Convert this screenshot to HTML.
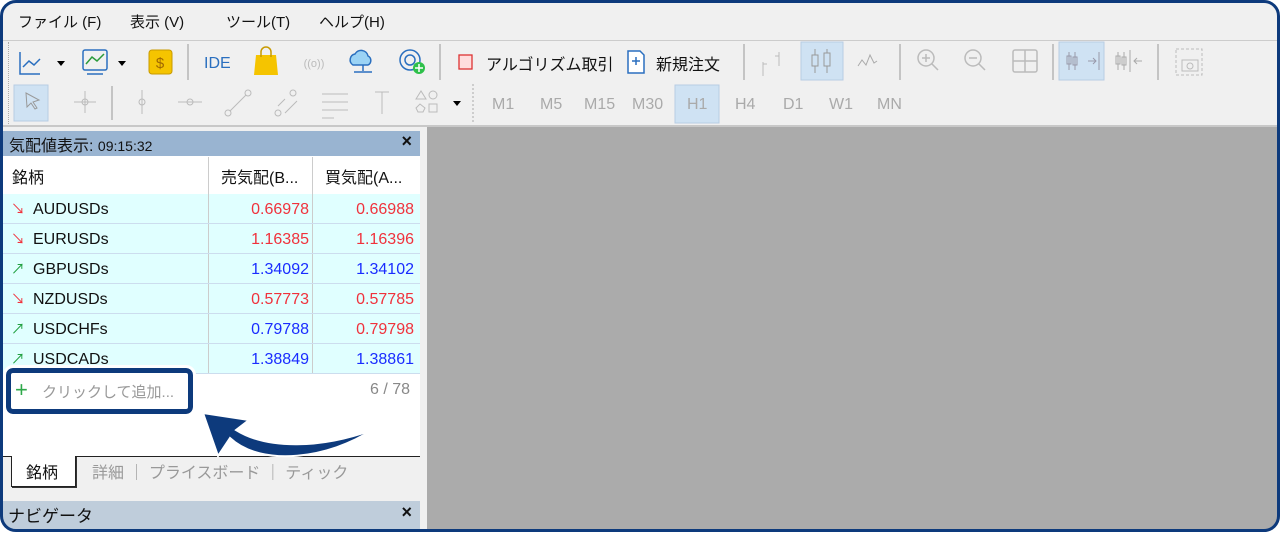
<!DOCTYPE html><html><head><meta charset="utf-8"><style>
*{margin:0;padding:0;box-sizing:border-box}
body{width:1280px;height:532px;background:#f0f0f0;font-family:"Liberation Sans","Noto Sans CJK JP",sans-serif;overflow:hidden;position:relative}
.border{position:absolute;left:0;top:0;width:1280px;height:532px;border:3px solid #0d3a7c;border-radius:16px;box-shadow:0 0 0 30px #fff;z-index:10}
.a{position:absolute}
.menu span{position:absolute;top:11px;font-size:15px;color:#111}
.tb{color:#aaa;font-size:16px}
.row{position:absolute;left:0;width:420px;height:30px;background:#e0ffff;border-bottom:1px solid #cde;font-size:16px}
.row .s{position:absolute;left:33px;top:7px;color:#111}
.row .ar{position:absolute;left:11px;top:5px;font-size:14px}
.row .b{position:absolute;right:111px;top:7px}
.row .k{position:absolute;right:6px;top:7px}
.vl{position:absolute;top:0;width:1px;height:100%;background:#ccc}
.r{color:#f0323c}.bl{color:#1a2cff}
</style></head><body>
<div class="menu">
<span style="left:18px">ファイル (F)</span><span style="left:130px">表示 (V)</span><span style="left:226px">ツール(T)</span><span style="left:319px">ヘルプ(H)</span>
</div>
<div class="a" style="left:0;top:40px;width:1280px;height:1px;background:#ccc"></div>
<svg class="a" style="left:0;top:40px" width="1280" height="86">
<g stroke="#2a6fbf" fill="none" stroke-width="1.5">
<path d="M20 12v22h20"/><path d="M23 27l6-6 5 4 6-6"/>
<rect x="83" y="10" width="24" height="20" rx="2"/><path d="M86 24l6-7 5 4 7-7" stroke="#2a9a3a"/><path d="M87 34h16"/>
</g>
<path d="M57 21h8l-4 5z M118 21h8l-4 5z" fill="#000"/>
<rect x="149" y="10" width="23" height="24" rx="3" fill="#f5c400" stroke="#c89a00"/><text x="160" y="28" font-size="15" text-anchor="middle" fill="#a06800" font-family="Liberation Sans">$</text>
<line x1="188" y1="4" x2="188" y2="40" stroke="#999"/>
<text x="204" y="28" font-size="16" fill="#2a6fbf" font-family="Liberation Sans">IDE</text>
<path d="M256 15h20l2 20h-24z" fill="#f5c400"/><path d="M261 17v-5a5 5 0 0 1 10 0v5" stroke="#c89a00" fill="none" stroke-width="1.5"/>
<text x="314" y="27" font-size="11" fill="#bbb" text-anchor="middle">((o))</text>
<path d="M353 25a6 6 0 0 1 2-11a7 7 0 0 1 13 2a5 5 0 0 1 0 9z" fill="#9bd3f5" stroke="#2a6fbf" stroke-width="1.5"/><path d="M363 25v6M354 32h18" stroke="#2a6fbf" stroke-width="1.5"/>
<circle cx="410" cy="20" r="10" fill="none" stroke="#2a6fbf" stroke-width="1.5"/><circle cx="410" cy="20" r="5" fill="none" stroke="#2a6fbf" stroke-width="1.5"/><circle cx="419" cy="28" r="6" fill="#2ec04a"/><path d="M419 24v8M415 28h8" stroke="#fff" stroke-width="1.5"/>
<line x1="440" y1="4" x2="440" y2="40" stroke="#999"/>
<rect x="459" y="15" width="13" height="14" fill="#fdd" stroke="#d33" stroke-width="1.3"/>
<path d="M628 11h12l4 4v18h-16z" fill="#fff" stroke="#2a6fbf" stroke-width="1.5"/><path d="M636 17v8M632 21h8" stroke="#2a6fbf" stroke-width="1.5"/>
<line x1="744" y1="4" x2="744" y2="40" stroke="#999"/>
<path d="M763 22v14M763 24h4M779 12v14M775 16h4" stroke="#bbb" fill="none"/>
<rect x="801" y="2" width="42" height="38" fill="#cfe2f3" stroke="#b7cde3"/>
<path d="M815 9v24M827 9v24" stroke="#999"/><rect x="812" y="15" width="6" height="11" fill="#cfe2f3" stroke="#999"/><rect x="824" y="13" width="6" height="13" fill="#cfe2f3" stroke="#999"/>
<path d="M858 26l4-6 4 5 4-10 4 8 3-2" stroke="#aaa" fill="none"/>
<line x1="900" y1="4" x2="900" y2="40" stroke="#999"/>
<g stroke="#bbb" fill="none" stroke-width="1.5"><circle cx="926" cy="18" r="8"/><path d="M932 24l6 6M922 18h8M926 14v8"/><circle cx="973" cy="18" r="8"/><path d="M979 24l6 6M969 18h8"/><rect x="1013" y="10" width="24" height="22" rx="2"/><path d="M1025 10v22M1013 21h24"/></g>
<line x1="1053" y1="4" x2="1053" y2="40" stroke="#999"/>
<rect x="1059" y="2" width="45" height="38" fill="#cfe2f3" stroke="#b7cde3"/>
<g stroke="#99a" fill="none"><path d="M1069 12v18M1075 12v18M1088 21h8M1093 18l3 3-3 3M1099 12v18"/><rect x="1067" y="16" width="4" height="8"/><rect x="1073" y="17" width="4" height="8"/></g>
<g stroke="#aaa" fill="none"><path d="M1118 12v18M1124 12v18M1130 10v22M1134 21h8M1137 18l-3 3 3 3"/><rect x="1116" y="16" width="4" height="8"/><rect x="1122" y="17" width="4" height="8"/></g>
<line x1="1158" y1="4" x2="1158" y2="40" stroke="#999"/>
<rect x="1176" y="9" width="26" height="26" fill="none" stroke="#bbb" stroke-dasharray="3 2"/><rect x="1182" y="20" width="16" height="11" fill="none" stroke="#bbb"/><circle cx="1190" cy="26" r="3" fill="none" stroke="#bbb"/>
<rect x="14" y="45" width="34" height="36" fill="#cfe2f3" stroke="#b7cde3"/>
<path d="M26 53l13 7-6 2 4 6-2 1-4-6-4 4z" fill="none" stroke="#999"/>
<g stroke="#bbb" fill="none"><path d="M85 51v22M74 62h22"/><circle cx="85" cy="62" r="3"/></g>
<line x1="112" y1="46" x2="112" y2="80" stroke="#999"/>
<g stroke="#bbb" fill="none"><path d="M142 50v24"/><circle cx="142" cy="62" r="3"/><path d="M178 62h24"/><circle cx="190" cy="62" r="3"/><path d="M230 71l16-16"/><circle cx="228" cy="73" r="3"/><circle cx="248" cy="53" r="3"/><path d="M278 66l7-7M285 73l12-12"/><circle cx="278" cy="73" r="3"/><circle cx="293" cy="53" r="3"/><path d="M322 54h26M322 62h26M322 70h26M322 78h12"/><path d="M375 52h14M382 52v22"/><path d="M416 59l5-8 5 8z"/><circle cx="433" cy="55" r="4"/><rect x="429" y="64" width="8" height="8"/><path d="M416 68l4-4 5 4-2 4h-5z"/></g>
<path d="M453 61h8l-4 5z" fill="#000"/>
<line x1="473" y1="44" x2="473" y2="82" stroke="#aaa" stroke-dasharray="2 2"/>
<rect x="675" y="45" width="44" height="38" fill="#cfe2f3" stroke="#b7cde3"/>
</svg>
<div class="a" style="top:42px;height:84px;width:2px;border-left:1px dotted #aaa;left:8px"></div>
<div class="a" style="left:486px;top:51px;font-size:16px;color:#111">アルゴリズム取引</div>
<div class="a" style="left:656px;top:51px;font-size:16px;color:#111">新規注文</div>
<div class="a tb" style="left:492px;top:96px">M1</div>
<div class="a tb" style="left:540px;top:96px">M5</div>
<div class="a tb" style="left:584px;top:96px">M15</div>
<div class="a tb" style="left:632px;top:96px">M30</div>
<div class="a tb" style="left:687px;top:96px">H1</div>
<div class="a tb" style="left:735px;top:96px">H4</div>
<div class="a tb" style="left:783px;top:96px">D1</div>
<div class="a tb" style="left:829px;top:96px">W1</div>
<div class="a tb" style="left:877px;top:96px">MN</div>
<div class="a" style="left:0;top:125px;width:1280px;height:2px;background:#c8c8c8"></div>
<div class="a" style="left:427px;top:127px;width:860px;height:410px;background:#ababab"></div>
<div class="a" style="left:0;top:131px;width:420px;height:25px;background:#99b4d1;font-size:16px;color:#111;padding:1px 9px">気配値表示: <span style="font-size:14px">09:15:32</span><span style="position:absolute;right:8px;top:0px;font-weight:bold;font-size:18px">×</span></div>
<div class="a" style="left:0;top:156px;width:420px;height:300px;background:#fff"></div>
<div class="a" style="left:0;top:157px;width:420px;height:37px;font-size:16px;color:#111">
<span class="a" style="left:12px;top:7px">銘柄</span><span class="a" style="left:221px;top:7px">売気配(B...</span><span class="a" style="left:325px;top:7px">買気配(A...</span>
<div class="vl" style="left:208px"></div><div class="vl" style="left:312px"></div></div>
<div class="row" style="top:194px"><span class="ar r">↘</span><span class="s">AUDUSDs</span><span class="b r">0.66978</span><span class="k r">0.66988</span><div class="vl" style="left:208px"></div><div class="vl" style="left:312px"></div></div>
<div class="row" style="top:224px"><span class="ar r">↘</span><span class="s">EURUSDs</span><span class="b r">1.16385</span><span class="k r">1.16396</span><div class="vl" style="left:208px"></div><div class="vl" style="left:312px"></div></div>
<div class="row" style="top:254px"><span class="ar" style="color:#20a040">↗</span><span class="s">GBPUSDs</span><span class="b bl">1.34092</span><span class="k bl">1.34102</span><div class="vl" style="left:208px"></div><div class="vl" style="left:312px"></div></div>
<div class="row" style="top:284px"><span class="ar r">↘</span><span class="s">NZDUSDs</span><span class="b r">0.57773</span><span class="k r">0.57785</span><div class="vl" style="left:208px"></div><div class="vl" style="left:312px"></div></div>
<div class="row" style="top:314px"><span class="ar" style="color:#20a040">↗</span><span class="s">USDCHFs</span><span class="b bl">0.79788</span><span class="k r">0.79798</span><div class="vl" style="left:208px"></div><div class="vl" style="left:312px"></div></div>
<div class="row" style="top:344px;height:30px"><span class="ar" style="color:#20a040">↗</span><span class="s">USDCADs</span><span class="b bl">1.38849</span><span class="k bl">1.38861</span><div class="vl" style="left:208px"></div><div class="vl" style="left:312px"></div></div>
<div class="a" style="left:6px;top:368px;width:187px;height:46px;border:5px solid #0d3a7c;border-radius:7px;background:#fff;outline:3px solid #fff"></div>
<div class="a" style="left:15px;top:377px;font-size:22px;color:#2ea84a">+</div>
<div class="a" style="left:42px;top:381px;font-size:15px;color:#999">クリックして追加...</div>
<div class="a" style="left:370px;top:381px;font-size:16px;color:#888">6 / 78</div>
<div class="a" style="left:0;top:457px;width:420px;height:43px;background:#f0f0f0"></div>
<div class="a" style="left:0;top:456px;width:420px;height:1px;background:#222"></div>
<div class="a" style="left:11px;top:456px;width:65px;height:31px;background:#fff;border:1px solid #222;border-top:none;box-shadow:1px 1px 0 #333"></div>
<div class="a" style="left:26px;top:459px;font-size:16px;color:#111">銘柄</div>
<div class="a" style="left:92px;top:459px;font-size:16px;color:#999">詳細 ｜ プライスボード ｜ ティック</div>
<svg class="a" style="left:0;top:0" width="430" height="532"><path d="M372 430C330 458 262 468 230 438L218 456L203 413L249 420L236 430C268 450 322 448 372 430z" fill="#0d3a7c" stroke="#fff" stroke-width="2"/></svg>
<div class="a" style="left:0;top:501px;width:420px;height:31px;background:#bfcddb;font-size:17px;color:#111;padding:1px 8px">ナビゲータ<span style="position:absolute;right:8px;top:1px;font-weight:bold;font-size:18px">×</span></div>
<div class="border"></div>
</body></html>
